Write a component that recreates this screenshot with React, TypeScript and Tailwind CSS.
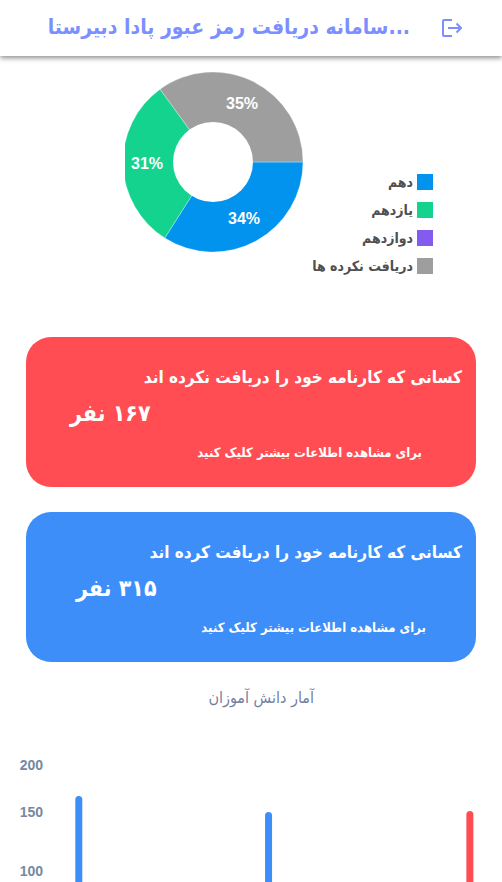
const slices = [
  { d: "M90 90 L180 90 A90 90 0 0 1 41.8 166 Z", fill: "#0293ee" },
  { d: "M90 90 L41.8 166 A90 90 0 0 1 37.1 17.2 Z", fill: "#13d38e" },
  { d: "M90 90 L37.1 17.2 A90 90 0 0 1 180 90 Z", fill: "#9e9e9e" },
];

const shares = [
  { x: 121, y: 152, text: "34%" },
  { x: 24, y: 97, text: "31%" },
  { x: 119, y: 37, text: "35%" },
];

const legend = [
  { label: "دهم", color: "bg-[#0293ee]" },
  { label: "یازدهم", color: "bg-[#13d38e]" },
  { label: "دوازدهم", color: "bg-[#845bef]" },
  { label: "دریافت نکرده ها", color: "bg-[#9e9e9e]" },
];

const bars = [
  { x: "15%", y: 58, fill: "#3d8ef8" },
  { x: "52.8%", y: 74, fill: "#3d8ef8" },
  { x: "92.9%", y: 73, fill: "#ff4d53" },
];

const ticks = [
  { y: 32, text: "200" },
  { y: 79, text: "150" },
  { y: 138, text: "100" },
];

type CardProps = { color: string; title: string; count: string; countPad: string; hintPad: string };

function Card({ color, title, count, countPad, hintPad }: CardProps) {
  return (
    <button
      type="button"
      dir="rtl"
      className={`block h-[150px] w-full rounded-[25px] px-[14px] pt-1.5 text-right font-bold text-white ${color}`}
    >
      <span className="block whitespace-nowrap text-[17px] leading-8">{title}</span>
      <span className={`block text-left text-[23px] leading-10 ${countPad}`}>{count}</span>
      <span className={`block whitespace-nowrap pt-1 text-[13px] leading-8 ${hintPad}`}>
        برای مشاهده اطلاعات بیشتر کلیک کنید
      </span>
    </button>
  );
}

export default function App() {
  return (
    <div className="flex h-screen flex-col overflow-hidden bg-white font-['DejaVu_Sans_Condensed','DejaVu_Sans',sans-serif]">
      <header className="flex h-14 shrink-0 items-center justify-end gap-7 bg-white pr-10 shadow-[0_2px_5px_rgba(0,0,0,0.45)]">
        <h1 dir="ltr" className="whitespace-nowrap text-[21px] font-bold text-[#7b8fff]">
          سامانه دریافت رمز عبور پادا دبیرستا...
        </h1>
        <button type="button" aria-label="خروج" className="text-[#7b8fff]">
          <svg width="24" height="24" viewBox="0 0 24 24" fill="none" stroke="currentColor" strokeWidth="2">
            <path d="M14 4H6a1 1 0 0 0-1 1v14a1 1 0 0 0 1 1h8" />
            <path d="M10 12h13M18.5 7.5 23 12l-4.5 4.5" />
          </svg>
        </button>
      </header>

      <main className="flex min-h-0 flex-1 flex-col">
        <section className="flex h-[281px] shrink-0 justify-center pl-14 pt-4">
          <div className="flex w-[308px] items-start justify-between">
            <svg className="shrink-0" width="178" height="180" viewBox="2 0 178 180" role="img" aria-label="نمودار پایه ها">
              {slices.map((s) => (
                <path key={s.fill} d={s.d} fill={s.fill} stroke="#ffffff" strokeWidth="0.3" />
              ))}
              <circle cx="90" cy="90" r="40" fill="white" />
              {shares.map((s) => (
                <text
                  key={s.text}
                  x={s.x}
                  y={s.y}
                  textAnchor="middle"
                  className="fill-white font-['Liberation_Sans',sans-serif] text-[16px] font-bold"
                >
                  {s.text}
                </text>
              ))}
            </svg>
            <ul dir="rtl" className="mt-24 text-[14px] font-bold text-[#4f4f4f]">
              {legend.map((item) => (
                <li key={item.label} className="flex h-7 items-center gap-1 whitespace-nowrap">
                  <span className={`size-4 ${item.color}`} />
                  {item.label}
                </li>
              ))}
            </ul>
          </div>
        </section>

        <section className="flex shrink-0 flex-col gap-[25px] px-[26px]">
          <Card
            color="bg-[#ff4d53]"
            title="کسانی که کارنامه خود را دریافت نکرده اند"
            count="۱۶۷ نفر"
            countPad="pl-[30px]"
            hintPad="pr-10"
          />
          <Card
            color="bg-[#3d8ef8]"
            title="کسانی که کارنامه خود را دریافت کرده اند"
            count="۳۱۵ نفر"
            countPad="pl-9"
            hintPad="pr-9"
          />
        </section>

        <h2 dir="rtl" className="h-[76px] shrink-0 pr-[188px] pt-6 text-[16px] leading-6 text-[#72809d]">
          آمار دانش آموزان
        </h2>
        <svg className="min-h-0 w-full flex-1" role="img" aria-label="آمار دانش آموزان">
          {ticks.map((t) => (
            <text
              key={t.text}
              x="43"
              y={t.y}
              textAnchor="end"
              className="fill-[#7589a2] font-['Liberation_Sans',sans-serif] text-[14px] font-bold"
            >
              {t.text}
            </text>
          ))}
          {bars.map((b) => (
            <rect key={b.x} x={b.x} y={b.y} width="7" height="400" rx="3.5" fill={b.fill} />
          ))}
        </svg>
      </main>
    </div>
  );
}
